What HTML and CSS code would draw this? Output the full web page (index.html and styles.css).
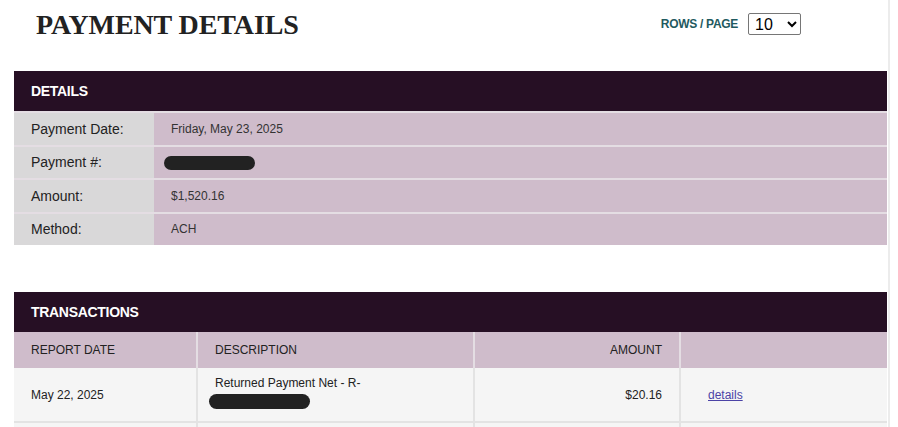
FILE: index.html
```html
<!DOCTYPE html>
<html lang="en">
  <head>
    <meta charset="UTF-8" />
    <meta name="viewport" content="width=device-width, initial-scale=1.0" />
    <title>Payment Details</title>
    <link rel="stylesheet" href="styles.css">
  </head>
  <body>
    <div class="page">
      <div class="top">
        <h1>PAYMENT DETAILS</h1>
        <div class="rows-page">
          <label for="rows">ROWS / PAGE</label>
          <select id="rows">
            <option>10</option>
            <option>25</option>
            <option>50</option>
          </select>
        </div>
      </div>

      <!-- Details -->
      <table class="details">
        <thead>
          <tr><th colspan="2">DETAILS</th></tr>
        </thead>
        <tbody>
          <tr>
            <td class="label">Payment Date:</td>
            <td class="value">Friday, May 23, 2025</td>
          </tr>
          <tr>
            <td class="label">Payment #:</td>
            <td class="value redacted-cell"><span class="redacted small"></span></td>
          </tr>
          <tr>
            <td class="label">Amount:</td>
            <td class="value">$1,520.16</td>
          </tr>
          <tr>
            <td class="label">Method:</td>
            <td class="value">ACH</td>
          </tr>
        </tbody>
      </table>

      <!-- Transactions -->
      <table class="transactions">
        <thead>
          <tr><th colspan="4" class="title">TRANSACTIONS</th></tr>
          <tr class="cols">
            <th class="c-date">REPORT DATE</th>
            <th class="c-desc">DESCRIPTION</th>
            <th class="c-amt">AMOUNT</th>
            <th class="c-link"></th>
          </tr>
        </thead>
        <tbody>
          <tr>
            <td>May 22, 2025</td>
            <td class="desc">Returned Payment Net - R-<br><span class="redacted wide"></span></td>
            <td class="c-amt">$20.16</td>
            <td class="c-link"><a href="#">details</a></td>
          </tr>
          <tr class="next">
            <td></td><td></td><td></td><td></td>
          </tr>
        </tbody>
      </table>
    </div>
  </body>
</html>
```

FILE: styles.css
```css
body {
  margin: 0;
  padding: 0;
  background-color: #ffffff;
  font-family: "Liberation Sans", Arial, sans-serif;
  color: #222222;
  overflow: hidden;
}

.page {
  width: 873px;
  height: 427px;
  padding: 0 1px 0 14px;
  border-right: 2px solid #ececec;
}

/* Top bar */
.top {
  display: flex;
  align-items: flex-start;
  height: 71px;
}

.top h1 {
  margin: 9px 0 0 22px;
  font-family: "Liberation Serif", "Times New Roman", serif;
  font-size: 28px;
  font-weight: bold;
  letter-spacing: -0.1px;
  color: #222222;
}

.rows-page {
  display: flex;
  align-items: center;
  gap: 10px;
  margin: 13px 86px 0 auto;
}

.rows-page label {
  font-size: 12px;
  font-weight: bold;
  color: #1f5a60;
  letter-spacing: -0.3px;
}

.rows-page select {
  width: 53px;
  height: 22px;
  font-family: "Liberation Sans", Arial, sans-serif;
  font-size: 16px;
  border: 1px solid #767676;
  border-radius: 2px;
  background-color: #ffffff;
  color: #000000;
  padding: 0 2px;
}

/* Tables */
table {
  width: 100%;
  border-collapse: collapse;
}

th.title,
.details thead th {
  background-color: #260f24;
  color: #ffffff;
  text-align: left;
  font-size: 14px;
  font-weight: bold;
  height: 40px;
  padding: 0 0 0 17px;
  letter-spacing: -0.3px;
}

.details td {
  height: 31.5px;
  padding: 0 17px;
  border-top: 2px solid #e4dde3;
}

.details td.label {
  width: 106px;
  background-color: #d9d8d9;
  font-size: 14px;
  color: #222222;
}

.details td.value {
  background-color: #cfbccb;
  font-size: 12px;
  color: #333333;
}

.details td.redacted-cell {
  padding-left: 10px;
}

.redacted {
  display: inline-block;
  background-color: #222222;
  border-radius: 8px;
  vertical-align: middle;
}

.redacted.small {
  width: 91px;
  height: 14px;
}

.redacted.wide {
  width: 101px;
  height: 15px;
  margin: 4px 0 0 -6px;
}

.transactions {
  margin-top: 47px;
}

.transactions tr.cols th {
  background-color: #cfbccb;
  height: 36px;
  padding: 0 17px;
  font-size: 12px;
  font-weight: normal;
  color: #222222;
  text-align: left;
  border-left: 2px solid #e4dde3;
}

.transactions tr.cols th:first-child {
  border-left: none;
}

.transactions td {
  background-color: #f5f5f5;
  height: 53px;
  padding: 0 17px;
  font-size: 12px;
  color: #222222;
  border-left: 2px solid #e3e3e3;
  border-bottom: 2px solid #e3e3e3;
}

.transactions td:first-child {
  border-left: none;
}

.transactions td.desc {
  vertical-align: top;
  padding-top: 8px;
  height: 45px;
}

.transactions .c-date {
  width: 148px;
}

.transactions .c-desc {
  width: 241px;
}

.transactions .c-amt {
  width: 170px;
  text-align: right !important;
}

.transactions .c-link {
  padding-left: 27px;
}

.transactions a {
  color: #4b43a6;
  text-decoration: underline;
}

.transactions tr.next td {
  height: 20px;
  border-bottom: none;
}
```
